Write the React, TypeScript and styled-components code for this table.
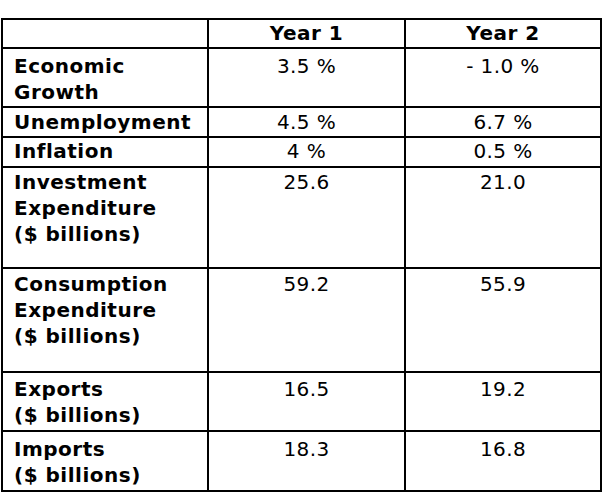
import React from "react";
import styled, { createGlobalStyle } from "styled-components";

type Row = {
  label: string[];
  y1: string;
  y2: string;
  height: number;
  pad: number;
};

const rows: Row[] = [
  { label: ["Economic", "Growth"], y1: "3.5 %", y2: "- 1.0 %", height: 59, pad: 4 },
  { label: ["Unemployment"], y1: "4.5 %", y2: "6.7 %", height: 30, pad: 1 },
  { label: ["Inflation"], y1: "4 %", y2: "0.5 %", height: 30, pad: 0 },
  {
    label: ["Investment", "Expenditure", "($ billions)"],
    y1: "25.6",
    y2: "21.0",
    height: 101,
    pad: 1,
  },
  {
    label: ["Consumption", "Expenditure", "($ billions)"],
    y1: "59.2",
    y2: "55.9",
    height: 104,
    pad: 2,
  },
  { label: ["Exports", "($ billions)"], y1: "16.5", y2: "19.2", height: 59, pad: 3 },
  { label: ["Imports", "($ billions)"], y1: "18.3", y2: "16.8", height: 60, pad: 4 },
];

const App: React.FC = () => {
  return (
    <Page>
      <GlobalStyle />
      <Table>
        <TableRow $h={29} $pad={0}>
          <LabelCell />
          <HeadCell>Year 1</HeadCell>
          <HeadCell>Year 2</HeadCell>
        </TableRow>
        {rows.map((r) => (
          <TableRow key={r.label[0]} $h={r.height} $pad={r.pad}>
            <LabelCell>
              {r.label.map((l) => (
                <div key={l}>{l}</div>
              ))}
            </LabelCell>
            <ValueCell>{r.y1}</ValueCell>
            <ValueCell>{r.y2}</ValueCell>
          </TableRow>
        ))}
      </Table>
    </Page>
  );
};

export default App;

const GlobalStyle = createGlobalStyle`
  body {
    margin: 0;
    background: #ffffff;
    font-family: "DejaVu Sans", Verdana, sans-serif;
    color: #000000;
  }
`;

const Page = styled.div`
  padding: 18px 0 0 1px;
`;

const Table = styled.div`
  width: 601px;
  box-sizing: border-box;
  border-top: 2px solid #000;
  border-left: 2px solid #000;
`;

const TableRow = styled.div<{ $h: number; $pad: number }>`
  display: grid;
  grid-template-columns: 206px 197px 196px;
  height: ${(p) => p.$h}px;
  > div {
    box-sizing: border-box;
    border-right: 2px solid #000;
    border-bottom: 2px solid #000;
    padding-top: ${(p) => p.$pad}px;
    font-size: 20px;
    line-height: 26px;
  }
`;

const LabelCell = styled.div`
  padding-left: 11px;
  font-weight: bold;
  letter-spacing: 0.5px;
`;

const HeadCell = styled.div`
  text-align: center;
  font-weight: bold;
  letter-spacing: 0.5px;
`;

const ValueCell = styled.div`
  text-align: center;
  letter-spacing: 0.4px;
`;
